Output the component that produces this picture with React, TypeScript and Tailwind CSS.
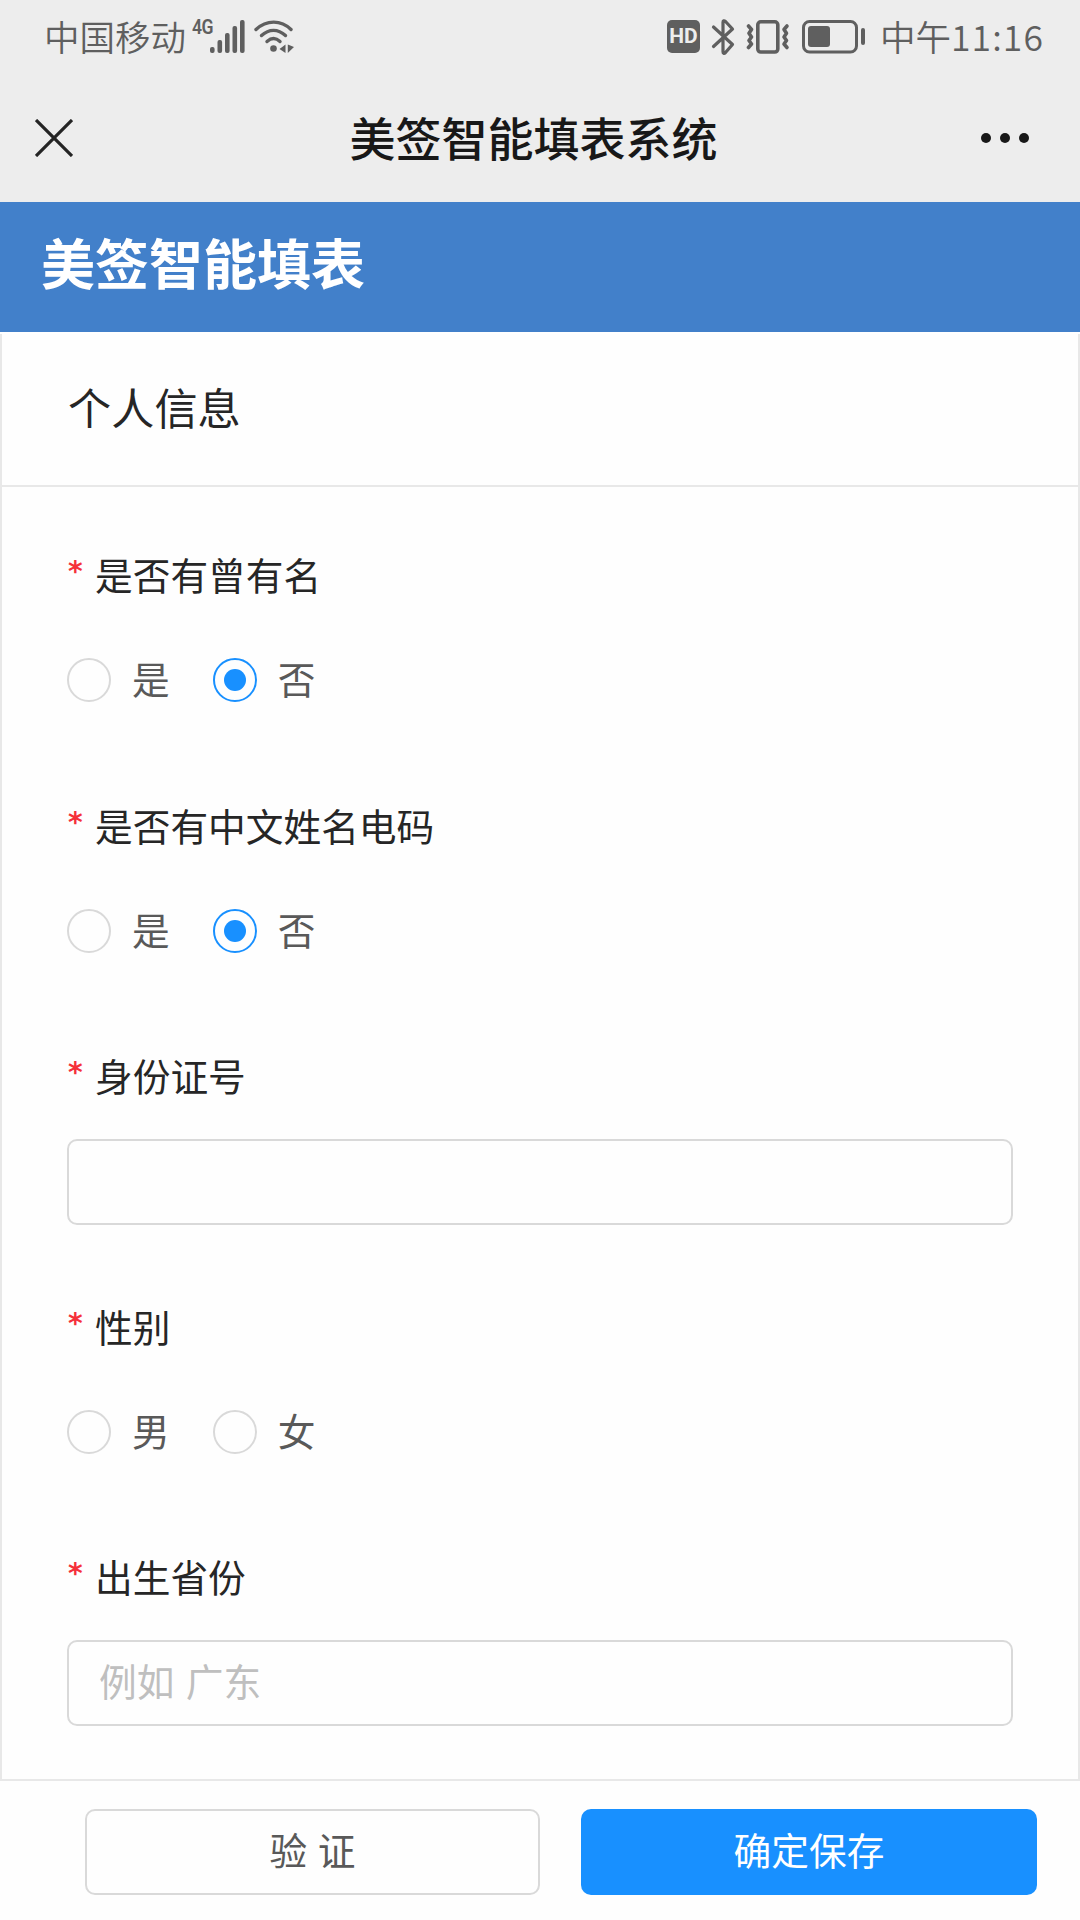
import React from "react";

interface FieldProps {
    label: string;
    children: React.ReactNode;
}

interface ChoiceProps {
    options: string[];
    selected?: string;
}

const SignalIcon: React.FC = () => (
    <svg width="36" height="34" viewBox="0 0 36 34" fill="#5f5f5f">
        <rect x="0" y="27" width="4.6" height="6" rx="2" />
        <rect x="7.5" y="20" width="4.6" height="13" rx="2" />
        <rect x="15" y="13" width="4.6" height="20" rx="2" />
        <rect x="22.5" y="6" width="4.6" height="27" rx="2" />
        <rect x="30" y="0" width="4.6" height="33" rx="2" />
    </svg>
);

const WifiIcon: React.FC = () => (
    <svg width="40" height="34" viewBox="0 0 40 34" fill="none" stroke="#5f5f5f" strokeWidth="3.4" strokeLinecap="round">
        <path d="M2 9.5C12.5 -0.3 27 -0.3 37 9.5" />
        <path d="M7.5 15.5C15 8.6 24 8.6 31.5 15.5" />
        <path d="M13 21.5C17.3 17.7 22 17.7 26 21.5" />
        <circle cx="19.5" cy="28.5" r="3.3" fill="#5f5f5f" stroke="none" />
        <path d="M31.5 24.5V33L25.5 28.9ZM33.8 24.5V33L40 27Z" fill="#5f5f5f" stroke="none" />
    </svg>
);

const BluetoothIcon: React.FC = () => (
    <svg width="24" height="38" viewBox="0 0 24 38" fill="none" stroke="#5f5f5f" strokeWidth="3.2" strokeLinecap="round" strokeLinejoin="round">
        <path d="M2.5 9L21.5 26.5L14.5 34.5C13 36 12 35.3 12 33.8V4.2C12 2.7 13 2.2 14.5 3.5L21.5 11L2.5 28.5" />
    </svg>
);

const VibrateIcon: React.FC = () => (
    <svg width="44" height="34" viewBox="0 0 44 34" fill="none" stroke="#5f5f5f" strokeWidth="3.6" strokeLinecap="round" strokeLinejoin="round">
        <rect x="11.8" y="1.8" width="20" height="30.2" rx="3" />
        <path d="M2.5 6L5.5 9.5L3 13.3L5.5 17L3 20.5L5.5 24L2.5 27.5" />
        <path d="M41 6L38 9.5L40.5 13.3L38 17L40.5 20.5L38 24L41 27.5" />
    </svg>
);

const BatteryIcon: React.FC = () => (
    <svg width="64" height="34" viewBox="0 0 64 34" fill="#5f5f5f">
        <rect x="1.5" y="1.5" width="53" height="30.5" rx="6" fill="none" stroke="#5f5f5f" strokeWidth="3" />
        <rect x="6" y="6" width="22" height="21" rx="3" />
        <rect x="59" y="8" width="4" height="17" rx="2" />
    </svg>
);

const StatusBar: React.FC = () => (
    <div className="flex h-[73px] items-center justify-between pl-[44px] pr-[36px] text-[35.5px] text-[#5f5f5f]">
        <div className="flex h-full items-center">
            <span className="pb-[2px] font-[350]">中国移动</span>
            <div className="flex h-[34px] w-[24px] items-start pl-[6px]">
                <span className="origin-left scale-x-[0.88] font-['Roboto'] text-[20px] font-semibold leading-[15px] tracking-[-0.5px]">4G</span>
            </div>
            <SignalIcon />
            <div className="pl-[8px]">
                <WifiIcon />
            </div>
        </div>
        <div className="flex h-full items-center">
            <div className="flex h-[33px] w-[33px] items-center justify-center rounded-[5px] bg-[#5f5f5f] font-['Roboto'] text-[21px] font-bold text-[#ededed]">
                HD
            </div>
            <div className="pl-[11px]">
                <BluetoothIcon />
            </div>
            <div className="pl-[11px]">
                <VibrateIcon />
            </div>
            <div className="pl-[12px]">
                <BatteryIcon />
            </div>
            <span className="pb-[2px] pl-[14px] font-[350]">中午</span>
            <span className="pb-[2px] font-[350] tracking-[1.1px]">11:16</span>
        </div>
    </div>
);

const NavBar: React.FC = () => (
    <div className="flex h-[129px] items-center justify-between pl-[35px] pr-[51px] text-[#181818]">
        <svg width="38" height="38" viewBox="0 0 38 38" stroke="#242424" strokeWidth="3.2">
            <path d="M1 1L37 37M37 1L1 37" />
        </svg>
        <h1 className="pb-[2px] pl-[13px] text-[46px] font-medium">美签智能填表系统</h1>
        <div className="flex gap-[9px]">
            <div className="h-[10px] w-[10px] rounded-full bg-[#181818]" />
            <div className="h-[10px] w-[10px] rounded-full bg-[#181818]" />
            <div className="h-[10px] w-[10px] rounded-full bg-[#181818]" />
        </div>
    </div>
);

const Field: React.FC<FieldProps> = ({ label, children }) => (
    <div className="h-[250.5px]">
        <div className="flex h-[60px] items-center pb-[3px] text-[37.7px] text-[#262626]">
            <span className="w-[28px] pb-[5px] pl-px font-['DejaVu_Sans'] text-[28px] font-bold text-[#f5303a]">*</span>
            <span>{label}</span>
        </div>
        <div className="mt-[31px] flex h-[87px] items-center">{children}</div>
    </div>
);

const RadioChoice: React.FC<ChoiceProps> = ({ options, selected }) => (
    <div className="flex gap-[43px]">
        {options.map((option) => (
            <label key={option} className="flex items-center gap-[21px]">
                {option === selected ? (
                    <span className="flex h-[44px] w-[44px] items-center justify-center rounded-full border-2 border-[#1890ff]">
                        <span className="h-[22px] w-[22px] rounded-full bg-[#1890ff]" />
                    </span>
                ) : (
                    <span className="h-[44px] w-[44px] rounded-full border-2 border-[#d9d9d9]" />
                )}
                <span className="pb-[4px] text-[37.7px] text-[#595959]">{option}</span>
            </label>
        ))}
    </div>
);

const TextInput: React.FC<{ placeholder?: string }> = ({ placeholder }) => (
    <input
        className="h-[86px] w-full rounded-[10px] border-2 border-[#d9d9d9] px-[30px] pb-[6px] text-[37.7px] [word-spacing:3px] placeholder:text-[#bfbfbf]"
        placeholder={placeholder}
    />
);

const App: React.FC = () => {
    return (
        <div className="flex h-[1920px] w-[1080px] flex-col overflow-hidden bg-white font-['Noto_Sans_CJK_SC',sans-serif]">
            <div className="bg-[#ededed]">
                <StatusBar />
                <NavBar />
            </div>
            <header className="flex h-[130px] items-center bg-[#4280ca] pb-[12px] pl-[41px]">
                <h2 className="text-[54px] font-bold text-white">美签智能填表</h2>
            </header>
            <main className="mt-[2px] flex-1 overflow-hidden border-x-2 border-[#e8e8e8] bg-[#fefefe]">
                <div className="flex h-[153px] items-center border-b-2 border-[#e8e8e8] pb-[6px] pl-[66px]">
                    <h3 className="text-[43.2px] font-normal text-[#262626]">个人信息</h3>
                </div>
                <div className="px-[65px] pt-[59px]">
                    <Field label="是否有曾有名">
                        <RadioChoice options={["是", "否"]} selected="否" />
                    </Field>
                    <Field label="是否有中文姓名电码">
                        <RadioChoice options={["是", "否"]} selected="否" />
                    </Field>
                    <Field label="身份证号">
                        <TextInput />
                    </Field>
                    <Field label="性别">
                        <RadioChoice options={["男", "女"]} />
                    </Field>
                    <Field label="出生省份">
                        <TextInput placeholder="例如 广东" />
                    </Field>
                </div>
            </main>
            <footer className="flex h-[141px] gap-[41px] border-t-2 border-[#e8e8e8] bg-[#fefefe] pl-[85px] pr-[43px] pt-[28px] text-[37.7px]">
                <button className="h-[86px] w-[455px] rounded-[10px] border-2 border-[#d9d9d9] pb-[5px] text-[#595959] [word-spacing:2px]">验 证</button>
                <button className="h-[86px] w-[456px] rounded-[10px] bg-[#1890ff] pb-[5px] text-white">确定保存</button>
            </footer>
        </div>
    );
};

export default App;
